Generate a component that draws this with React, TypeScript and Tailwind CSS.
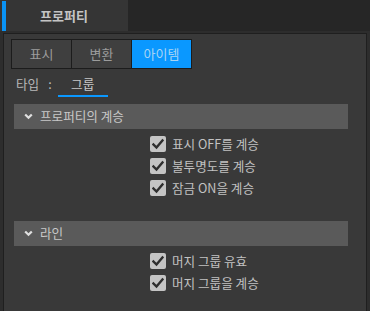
import React from 'react';

const font = { fontFamily: '"Noto Sans CJK KR", "Noto Sans", sans-serif' };

const Check = ({ label }: { label: string }) => (
  <div className="flex items-center h-[22px] pl-[146px]">
    <div className="w-4 h-4 rounded-[2px] bg-[#c4c4c4] flex items-center justify-center">
      <svg width="12" height="12" viewBox="0 0 12 12">
        <path d="M1.5 6.5 L4.5 9.5 L10.5 2.5" fill="none" stroke="#2e2e2e" strokeWidth="2.4" strokeLinecap="square" />
      </svg>
    </div>
    <span className="ml-[6px] text-[12.6px] text-[#c2c2c2] leading-none">{label}</span>
  </div>
);

const Header = ({ title }: { title: string }) => (
  <div className="ml-[10px] mr-[18px] h-[25px] bg-[#5a5a5a] flex items-center pl-[10px]">
    <svg width="9" height="7" viewBox="0 0 9 7">
      <path d="M1.2 1.5 L4.5 4.8 L7.8 1.5" fill="none" stroke="#e0e0e0" strokeWidth="2.2" />
    </svg>
    <span className="ml-[7px] text-[12.6px] text-[#c8c8c8] leading-none">{title}</span>
  </div>
);

export default function App() {
  const tabs = ['표시', '변환', '아이템'];
  return (
    <div className="w-[370px] h-[311px] bg-[#2d2d2d] overflow-hidden" style={font}>
      {/* top tab bar */}
      <div className="h-[31px] bg-[#262626] flex">
        <div className="w-[128px] h-full bg-[#353535] flex items-center relative">
          <div className="absolute left-[2px] top-[1px] bottom-[0px] w-[4px] bg-[#0a93f5]" />
          <span className="w-full text-center text-[13px] font-bold text-[#c4c4c4]">프로퍼티</span>
        </div>
      </div>

      {/* panel */}
      <div className="mt-[2px] mx-[3px] h-[290px] border border-[#1f1f1f] bg-[#393939]">
        <div className="pt-[5px] pl-[7px]">
          <div className="flex w-[181px] h-[30px] border border-[#1c1c1c] bg-[#1c1c1c] gap-px">
            {tabs.map((t, i) => (
              <div
                key={t}
                className={`flex-1 flex items-center justify-center text-[13px] ${i === 2 ? 'bg-[#0a98ff] text-[#a8d4f4]' : 'bg-[#3f3f3f] text-[#9c9c9c]'}`}
              >
                {t}
              </div>
            ))}
          </div>
        </div>

        <div className="flex items-start h-[30px] pl-[12px] text-[12.6px] text-[#b8b8b8]">
          <span className="mt-[9px] leading-none">타입</span>
          <span className="mt-[9px] ml-[9px] leading-none">:</span>
          <div className="ml-[6px] w-[50px] h-[30px] flex flex-col items-center">
            <span className="mt-[9px] leading-none text-[#c8c8c8]">그룹</span>
            <div className="mt-auto mb-[2px] w-full h-[2px] bg-[#0a98ff]" />
          </div>
        </div>

        <div className="mt-[5px]">
          <Header title="프로퍼티의 계승" />
        </div>
        <div className="mt-[4px]">
          <Check label="표시 OFF를 계승" />
          <Check label="불투명도를 계승" />
          <Check label="잠금 ON을 계승" />
        </div>

        <div className="mt-[22px]">
          <Header title="라인" />
        </div>
        <div className="mt-[4px]">
          <Check label="머지 그룹 유효" />
          <Check label="머지 그룹을 계승" />
        </div>
      </div>
    </div>
  );
}
